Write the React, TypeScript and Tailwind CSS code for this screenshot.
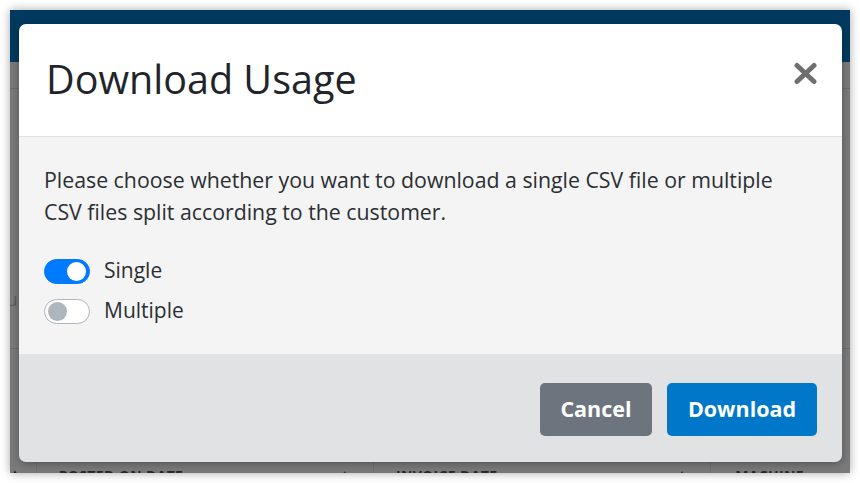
import { useState } from 'react'

function Toggle({ on, onClick }: { on: boolean; onClick: () => void }) {
  return (
    <button
      type="button"
      onClick={onClick}
      className={
        on
          ? 'flex h-[25px] w-[46px] items-center justify-end rounded-full border border-[#007bff] bg-[#007bff] px-[3px]'
          : 'flex h-[25px] w-[46px] items-center justify-start rounded-full border border-[#adb5bd] bg-white px-[3px]'
      }
    >
      <span className={on ? 'h-[19px] w-[19px] rounded-full bg-white' : 'h-[19px] w-[19px] rounded-full bg-[#adb5bd]'} />
    </button>
  )
}

export default function App() {
  const [mode, setMode] = useState<'single' | 'multiple'>('single')

  return (
    <div className="h-[483px] w-[860px] bg-white p-[10px] font-['Open_Sans','Noto_Sans',sans-serif]">
      <div className="relative flex h-[463px] w-[840px] flex-col overflow-hidden bg-[#7a7a7a] shadow-[0_0_9px_rgba(0,0,0,0.35)]">
        {/* page behind the dialog */}
        <div className="h-[52px] bg-[#013a5e]" />
        <div className="h-[27px] border-b border-[#6c6c6c]" />
        <div className="flex flex-1 flex-col">
          <div className="-ml-[4px] mt-[201px] text-[19px] leading-none text-[#5e5e5e]">ub</div>
          <div className="mt-[39px] border-b border-[#6c6c6c]" />
          <div className="mt-auto flex h-[11px] items-start text-[14px] font-bold uppercase tracking-wide text-[#262626]">
            <div className="w-[27px] border-r border-[#707070] pt-[3px] text-[10px] text-[#1f1f1f]">▲</div>
            <div className="flex w-[341px] justify-between border-r border-[#707070] pl-[22px] pr-[22px] pt-[3px]">
              <span>Posted on date</span>
              <span className="text-[12px]">▲</span>
            </div>
            <div className="flex w-[341px] justify-between border-r border-[#707070] pl-[22px] pr-[22px] pt-[3px]">
              <span>Invoice date</span>
              <span className="text-[12px]">▲</span>
            </div>
            <div className="pl-[24px] pt-[3px]">Machine name</div>
          </div>
        </div>

        {/* dialog */}
        <div className="absolute left-[9px] top-[14px] flex w-[823px] flex-col overflow-hidden rounded-[7px] shadow-[0_2px_8px_rgba(0,0,0,0.3)]">
          <div className="flex h-[113px] items-center justify-between border-b border-[#dee2e6] bg-white pl-[27px] pr-[24px]">
            <h2 className="text-[39.5px] font-normal leading-none text-[#212529]">Download Usage</h2>
            <button type="button" className="mb-[14px]">
              <svg width="25" height="23" viewBox="0 0 25 23">
                <path d="M4 3.5 L21 19.5 M21 3.5 L4 19.5" stroke="#6f6f6f" strokeWidth="5" strokeLinecap="round" />
              </svg>
            </button>
          </div>
          <div className="bg-[#f4f4f4] pb-[27px] pl-[25px] pr-[25px] pt-[27px]">
            <p className="text-[21.3px] leading-[32px] text-[#2b2f33]">
              Please choose whether you want to download a single CSV file or multiple
              <br />
              CSV files split according to the customer.
            </p>
            <div className="mt-[27px] flex flex-col gap-[8px]">
              <div className="flex h-[32px] items-center gap-[14px]">
                <Toggle on={mode === 'single'} onClick={() => setMode('single')} />
                <span className="text-[21px] text-[#2b2f33]">Single</span>
              </div>
              <div className="flex h-[32px] items-center gap-[14px]">
                <Toggle on={mode === 'multiple'} onClick={() => setMode('multiple')} />
                <span className="text-[21px] text-[#2b2f33]">Multiple</span>
              </div>
            </div>
          </div>
          <div className="flex h-[108px] items-center justify-end gap-[15px] bg-[#e1e2e4] pr-[25px] pt-[3px]">
            <button type="button" className="h-[53px] w-[112px] rounded-[5px] bg-[#6c757d] text-[21.5px] font-bold text-white">
              Cancel
            </button>
            <button type="button" className="h-[53px] w-[150px] rounded-[5px] bg-[#0077c8] text-[21.5px] font-bold text-white">
              Download
            </button>
          </div>
        </div>
      </div>
    </div>
  )
}
